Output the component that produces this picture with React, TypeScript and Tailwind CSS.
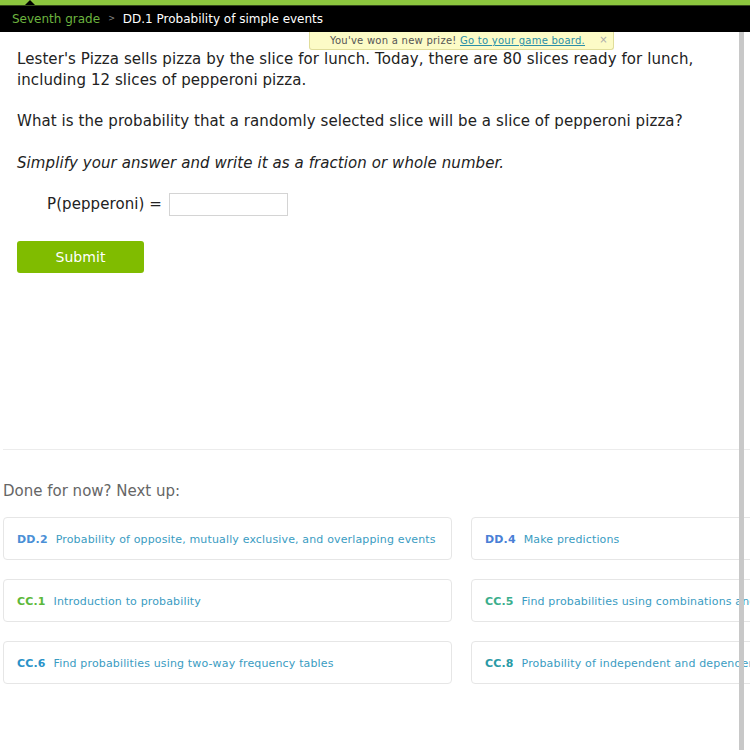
const nextUp = [
  [
    { code: "DD.2", codeColor: "text-[#4a8fd6]", label: "Probability of opposite, mutually exclusive, and overlapping events" },
    { code: "DD.4", codeColor: "text-[#4a7fd6]", label: "Make predictions" },
  ],
  [
    { code: "CC.1", codeColor: "text-[#5cb83a]", label: "Introduction to probability" },
    { code: "CC.5", codeColor: "text-[#3aae8c]", label: "Find probabilities using combinations and permutations" },
  ],
  [
    { code: "CC.6", codeColor: "text-[#2a92c8]", label: "Find probabilities using two-way frequency tables" },
    { code: "CC.8", codeColor: "text-[#2a9aa6]", label: "Probability of independent and dependent events" },
  ],
]

function SkillCard({ code, codeColor, label }: { code: string; codeColor: string; label: string }) {
  return (
    <div className="flex h-[43px] w-[449px] shrink-0 items-center gap-[8px] whitespace-nowrap rounded-[4px] border border-[#e6e6e6] bg-white pl-[13px] pt-[3px] text-[11px] tracking-[0.15px]">
      <span className={`font-bold ${codeColor}`}>{code}</span>
      <span className="text-[#3a9cc2]">{label}</span>
    </div>
  )
}

export default function App() {
  return (
    <div className="relative h-[750px] w-[750px] overflow-hidden bg-white font-['DejaVu_Sans',Verdana,sans-serif]">
      {/* top bars */}
      <div className="relative h-[5px] bg-[#8cc63e]">
        <div className="absolute bottom-0 left-[25px] h-0 w-0 border-x-[5px] border-b-[5px] border-x-transparent border-b-black" />
      </div>
      <div className="h-[1px] bg-[#34481a]" />
      <div className="flex h-[26px] items-center gap-[8px] bg-black pl-[12px] text-[12px]">
        <span className="text-[#6cb33f]">Seventh grade</span>
        <span className="text-[8px] text-[#888]">&gt;</span>
        <span className="text-white">DD.1 Probability of simple events</span>
      </div>

      {/* prize notice */}
      <div className="absolute left-[309px] top-[32px] flex h-[18px] w-[305px] items-center justify-center rounded-b-[3px] border border-t-0 border-[#e0dd9a] bg-[#fcfbc6] pr-[8px] text-[10px] tracking-[0.25px] text-[#555]">
        <span>
          You've won a new prize!{" "}
          <span className="text-[#2a8fa8] underline">Go to your game board.</span>
        </span>
        <span className="absolute right-[5px] top-[0px] text-[10px] text-[#aaa]">×</span>
      </div>

      {/* question */}
      <div className="pl-[17px] pt-[17px] text-[15px] leading-[21px] tracking-[0.08px] text-[#222]">
        <p>
          Lester's Pizza sells pizza by the slice for lunch. Today, there are 80 slices ready for lunch,
          <br />
          including 12 slices of pepperoni pizza.
        </p>
        <p className="mt-[20px]">What is the probability that a randomly selected slice will be a slice of pepperoni pizza?</p>
        <p className="mt-[21px] italic">Simplify your answer and write it as a fraction or whole number.</p>
        <div className="mt-[19px] flex items-center gap-[7px] pl-[30px]">
          <span>P(pepperoni) =</span>
          <div className="h-[23px] w-[119px] border border-[#d4d4d4] bg-white" />
        </div>
        <button className="mt-[25px] flex h-[32px] w-[127px] items-center justify-center rounded-[3px] bg-[#80bc00] text-[14px] text-white">
          Submit
        </button>
      </div>

      {/* next up */}
      <div className="mt-[176px] ml-[3px] h-[1px] bg-[#ececec]" />
      <div className="pl-[3px]">
        <p className="mt-[31px] text-[15px] leading-[20px] text-[#666]">Done for now? Next up:</p>
        <div className="mt-[16px] flex flex-col gap-[19px]">
          {nextUp.map((row, i) => (
            <div key={i} className="flex gap-[19px]">
              {row.map((s) => (
                <SkillCard key={s.code} {...s} />
              ))}
            </div>
          ))}
        </div>
      </div>

      {/* scrollbar */}
      <div className="absolute bottom-0 left-[739px] top-[32px] w-[5px] bg-[#c8c8c8]" />
    </div>
  )
}
